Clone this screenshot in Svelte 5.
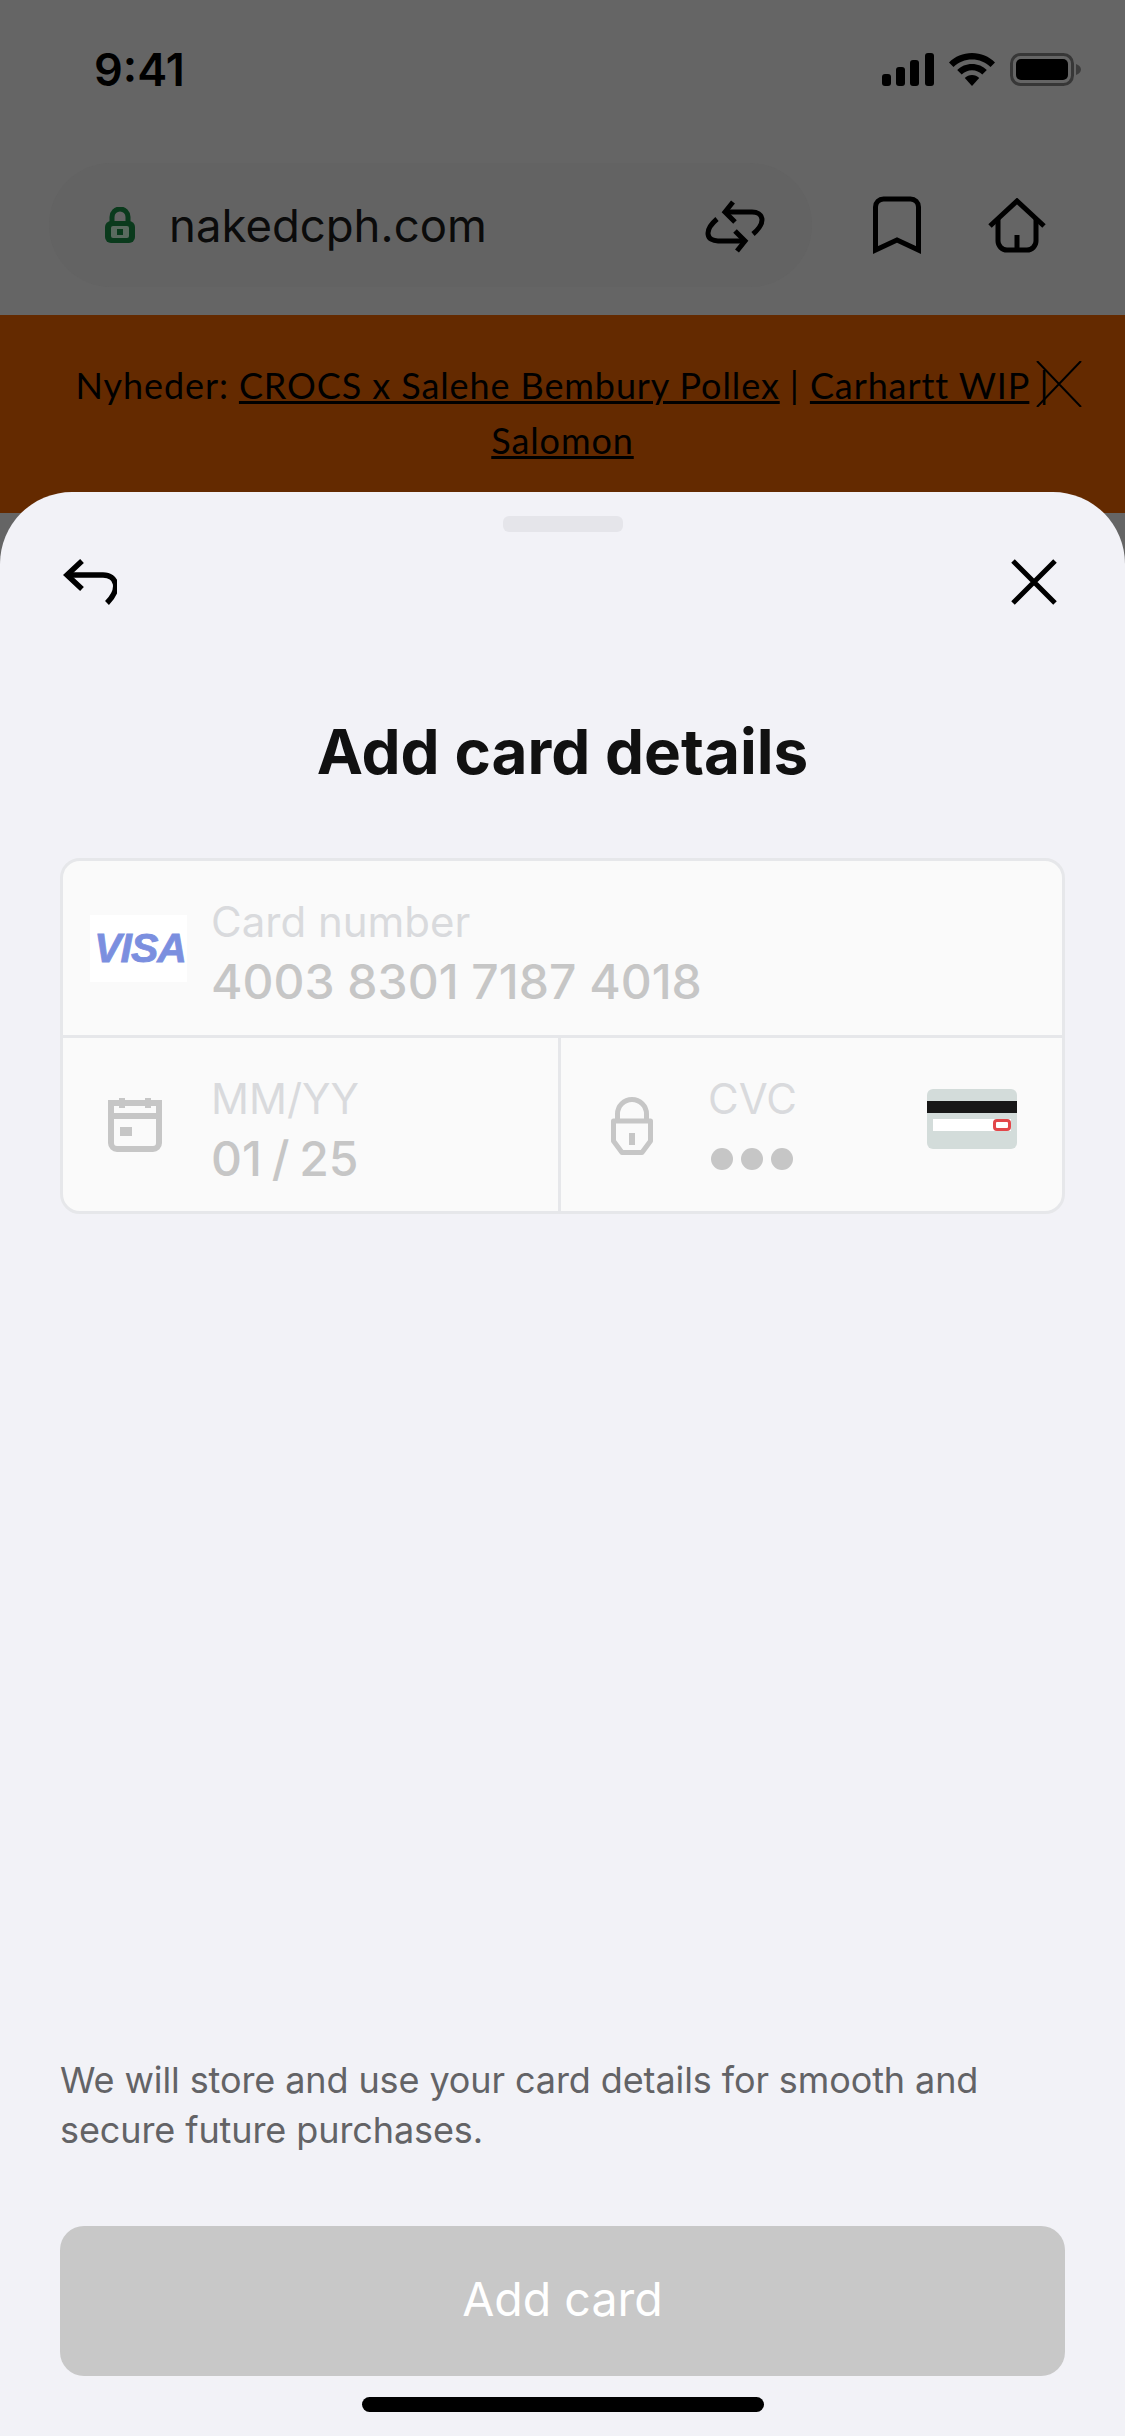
<script>
  const dots = [1, 2, 3];
</script>

<div class="page">
  <div class="backdrop">
    <div class="status">
      <span class="time">9:41</span>
      <div class="status-icons">
        <svg width="52" height="33" viewBox="0 0 52 33">
          <rect x="0" y="21" width="9" height="12" rx="3" />
          <rect x="14" y="14" width="9" height="19" rx="3" />
          <rect x="28" y="7" width="9" height="26" rx="3" />
          <rect x="43" y="0" width="9" height="33" rx="3" />
        </svg>
        <svg width="46" height="33" viewBox="0 0 46 33">
          <path d="M23 0C14 0 6 3.500 0 9.500l4.500 4.500C9.500 9 16 6.500 23 6.500S36.500 9 41.500 14L46 9.500C40 3.500 32 0 23 0z" />
          <path d="M23 11c-5.800 0-11 2.300-14.800 6l4.500 4.500c2.700-2.600 6.300-4.200 10.300-4.200s7.600 1.600 10.300 4.200l4.500-4.500C34 13.300 28.800 11 23 11z" />
          <path d="M23 22c-2.800 0-5.300 1.100-7.200 2.900L23 33l7.200-8.100C28.300 23.100 25.800 22 23 22z" />
        </svg>
        <svg width="71" height="33" viewBox="0 0 71 33">
          <rect x="1.500" y="1.500" width="61" height="30" rx="9" fill="none" stroke="#000" stroke-opacity="0.45" stroke-width="3" />
          <rect x="6" y="6" width="52" height="21" rx="5" />
          <path d="M66 11c3 1 5 3 5 5.500s-2 4.500-5 5.500z" fill-opacity="0.4" />
        </svg>
      </div>
    </div>

    <div class="browser">
      <div class="pill">
        <svg class="site-lock" width="30" height="36" viewBox="0 0 30 36">
          <path d="M7 16V10a8 8 0 0 1 16 0v6" fill="none" stroke="#0a3a1c" stroke-width="5" />
          <rect x="0" y="14" width="30" height="22" rx="6" fill="#0a3a1c" />
          <rect x="6" y="19" width="18" height="12" rx="2" fill="#5a6a5f" />
          <rect x="12" y="22" width="6" height="6" fill="#0a3a1c" />
        </svg>
        <span class="url">nakedcph.com</span>
        <svg class="reload" width="60" height="53" viewBox="0 0 60 53" fill="none" stroke="#000" stroke-width="5">
          <path d="M28 2 L20 12 L30 22" />
          <path d="M20 12 H47 C58 12 62 22 48 34" />
          <path d="M32 51 L40 41 L30 31" />
          <path d="M40 41 H13 C2 41 -2 31 12 19" />
        </svg>
      </div>
      <svg class="bookmark" width="48" height="59" viewBox="0 0 48 59" fill="none" stroke="#000" stroke-width="5">
        <path d="M2.500 54V11a8 8 0 0 1 8-8h27a8 8 0 0 1 8 8v43L24 44z" />
      </svg>
      <svg class="house" width="58" height="55" viewBox="0 0 58 55" fill="none" stroke="#000" stroke-width="5">
        <path d="M2 28 L29 3 L56 28" />
        <path d="M10 21V43a9 9 0 0 0 9 9h20a9 9 0 0 0 9-9V21" />
        <path d="M29 37V52" />
      </svg>
    </div>

    <div class="banner">
      <p>Nyheder: <a href="#crocs">CROCS x Salehe Bembury Pollex</a> | <a href="#carhartt">Carhartt WIP</a> | <a href="#salomon">Salomon</a></p>
      <svg class="banner-close" width="46" height="46" viewBox="0 0 46 46" stroke="#000" stroke-width="2">
        <path d="M1 0 L45 46 M45 0 L1 46" />
      </svg>
    </div>
  </div>

  <div class="sheet">
    <div class="handle"></div>
    <div class="sheet-nav">
      <svg width="54" height="46" viewBox="0 0 54 46" fill="none" stroke="#000" stroke-width="5.500">
        <path d="M19 2 L4 16 L19 30" />
        <path d="M4 16 H40 C54 16 58 30 44 44" />
      </svg>
      <svg width="46" height="46" viewBox="0 0 46 46" stroke="#000" stroke-width="5">
        <path d="M2 2 L44 44 M44 2 L2 44" />
      </svg>
    </div>

    <h1>Add card details</h1>

    <div class="fields">
      <div class="row number">
        <div class="visa"><span>VISA</span></div>
        <div class="field">
          <span class="label">Card number</span>
          <span class="value">4003 8301 7187 4018</span>
        </div>
      </div>
      <div class="row split">
        <div class="cell expiry">
          <svg class="cal" width="54" height="54" viewBox="0 0 54 54" fill="none" stroke="#c6c6c6" stroke-width="6">
            <path d="M3 5H51V45a6 6 0 0 1-6 6H9a6 6 0 0 1-6-6z" />
            <path d="M3 18H51" />
            <path d="M14 0V10M40 0V10" />
            <rect x="12" y="29" width="12" height="9" fill="#c6c6c6" stroke="none" />
          </svg>
          <div class="field">
            <span class="label">MM/YY</span>
            <span class="value date">01 / 25</span>
          </div>
        </div>
        <div class="cell cvc">
          <svg class="pad" width="42" height="60" viewBox="0 0 42 60" fill="none" stroke="#c6c6c6" stroke-width="5">
            <path d="M6.500 26V19a14.500 14.500 0 0 1 29 0v7" />
            <path d="M2.500 26H39.500V46L31 57.500H11L2.500 46z" stroke-linejoin="round" />
            <rect x="18" y="38" width="6" height="12" fill="#c6c6c6" stroke="none" />
          </svg>
          <div class="field">
            <span class="label">CVC</span>
            <div class="dots">
              {#each dots as d (d)}
                <i></i>
              {/each}
            </div>
          </div>
          <div class="card-back">
            <div class="stripe"></div>
            <div class="sign"><b></b></div>
          </div>
        </div>
      </div>
    </div>

    <div class="spacer"></div>

    <p class="note">We will store and use your card details for smooth and secure future purchases.</p>
    <button type="button" class="add">Add card</button>
    <div class="home-bar"></div>
  </div>
</div>

<style>
  :global(body) {
    margin: 0;
    background: #656565;
  }

  .page {
    position: relative;
    width: 1125px;
    height: 2436px;
    overflow: hidden;
    font-family: Inter, "Liberation Sans", sans-serif;
    background: #656565;
  }

  .status {
    display: flex;
    justify-content: space-between;
    align-items: center;
    height: 52px;
    padding: 43px 44px 0 94px;
  }

  .time {
    font-size: 45px;
    font-weight: 600;
    color: #000;
  }

  .status-icons {
    display: flex;
    align-items: center;
    gap: 15px;
  }

  .browser {
    display: flex;
    align-items: center;
    height: 124px;
    margin-top: 68px;
    padding-left: 49px;
  }

  .pill {
    display: flex;
    align-items: center;
    width: 763px;
    height: 124px;
    border-radius: 62px;
    background: #636363;
    padding-left: 56px;
    box-sizing: border-box;
  }

  .url {
    margin-left: 34px;
    font-size: 45.500px;
    color: #0b0b0b;
    width: 340px;
    white-space: nowrap;
  }

  .reload {
    margin-left: 196px;
    margin-top: 2px;
  }

  .bookmark {
    margin-left: 61px;
  }

  .house {
    margin-left: 67px;
  }

  .banner {
    position: relative;
    height: 198px;
    margin-top: 28px;
    background: #642a00;
    box-sizing: border-box;
    padding: 43px 70px 0;
  }

  .banner p {
    margin: 0;
    text-align: center;
    font-family: Lato, sans-serif;
    font-size: 36px;
    letter-spacing: 0.900px;
    line-height: 55px;
    color: #000;
  }

  .banner a {
    color: #000;
    text-decoration: underline;
    text-decoration-thickness: 3px;
  }

  .banner-close {
    position: absolute;
    left: 1036px;
    top: 46px;
  }

  .sheet {
    position: absolute;
    left: 0;
    top: 492px;
    width: 1125px;
    height: 1944px;
    display: flex;
    flex-direction: column;
    box-sizing: border-box;
    padding: 24px 60px 0;
    background: #f2f2f7;
    border-radius: 72px 72px 0 0;
  }

  .handle {
    align-self: center;
    width: 120px;
    height: 16px;
    border-radius: 6px;
    background: #e5e5ea;
  }

  .sheet-nav {
    display: flex;
    justify-content: space-between;
    margin-top: 27px;
    padding-left: 3px;
    padding-right: 8px;
  }

  h1 {
    margin: 100px 0 0;
    text-align: center;
    font-size: 62px;
    line-height: 94px;
    font-weight: 700;
    color: #111;
  }

  .fields {
    margin-top: 59px;
    height: 356px;
    flex-shrink: 0;
    box-sizing: border-box;
    display: flex;
    flex-direction: column;
    background: #fafafa;
    border: 3px solid #e6e7ea;
    border-radius: 20px;
  }

  .row {
    display: flex;
    align-items: center;
  }

  .number {
    border-bottom: 3px solid #e6e7ea;
    height: 174px;
    flex-shrink: 0;
    padding-left: 27px;
  }

  .split {
    flex: 1;
    align-items: stretch;
  }

  .visa {
    display: flex;
    align-items: center;
    justify-content: center;
    width: 97px;
    height: 67px;
    margin-right: 24px;
    background: #fff;
  }

  .visa span {
    font-family: "Liberation Sans", sans-serif;
    font-size: 41px;
    font-weight: 700;
    font-style: italic;
    color: #7b8fdf;
    letter-spacing: -1px;
    -webkit-text-stroke: 0.8px #7b8fdf;
    margin-left: 3px;
  }

  .field {
    display: flex;
    flex-direction: column;
    margin-top: 8px;
  }

  .label {
    font-size: 42px;
    line-height: 60px;
    color: #d9dadd;
  }

  .value {
    font-size: 48px;
    line-height: 60px;
    font-weight: 500;
    color: #c6c6c6;
    white-space: nowrap;
  }

  .date {
    word-spacing: -3px;
  }

  .cell {
    display: flex;
    align-items: center;
  }

  .expiry {
    width: 495px;
    box-sizing: content-box;
    border-right: 3px solid #e6e7ea;
  }

  .cal {
    margin-left: 45px;
    margin-right: 49px;
  }

  .cvc {
    flex: 1;
  }

  .pad {
    margin-left: 50px;
    margin-right: 55px;
  }

  .dots {
    display: flex;
    gap: 8px;
    align-items: center;
    height: 60px;
    padding-left: 3px;
  }

  .dots i {
    width: 22px;
    height: 22px;
    border-radius: 50%;
    background: #c6c6c6;
  }

  .card-back {
    margin-left: auto;
    margin-right: 45px;
    margin-top: -12px;
    width: 90px;
    height: 60px;
    border-radius: 6px;
    background: #d3dcda;
    overflow: hidden;
  }

  .stripe {
    height: 12px;
    margin-top: 12px;
    background: #171717;
  }

  .sign {
    display: flex;
    justify-content: flex-end;
    height: 12px;
    margin: 6px 6px 0;
    background: #fff;
  }

  .sign b {
    width: 18px;
    height: 12px;
    box-sizing: border-box;
    border: 3px solid #e2474a;
    border-radius: 4px;
  }

  .spacer {
    flex: 1;
  }

  .note {
    margin: 0;
    font-size: 36px;
    line-height: 50px;
    letter-spacing: -0.100px;
    color: #636366;
  }

  .add {
    margin-top: 71px;
    height: 150px;
    border: 0;
    border-radius: 24px;
    background: #c8c8c8;
    color: #fff;
    font-family: inherit;
    font-size: 46.500px;
    font-weight: 400;
    padding-bottom: 5px;
  }

  .home-bar {
    align-self: center;
    width: 402px;
    height: 15px;
    margin: 21px 0 24px;
    border-radius: 8px;
    background: #000;
  }
</style>
